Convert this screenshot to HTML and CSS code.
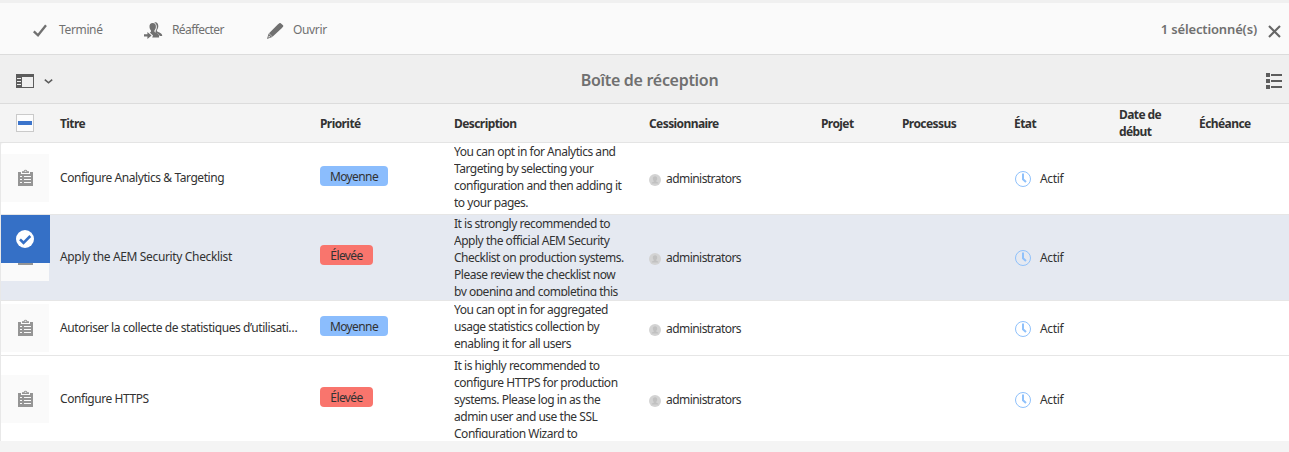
FILE: index.html
```html
<!DOCTYPE html>
<html lang="fr">
<head>
<meta charset="utf-8">
<title>Boîte de réception</title>
<link rel="stylesheet" href="styles.css">
</head>
<body>
<svg class="defs" width="0" height="0">
  <symbol id="task" viewBox="0 0 15 17">
    <path fill-rule="evenodd" d="M0 3h3v2h9V3h3v14H0zM2 7v1h2V7zM6 7v1h7V7zM2 10v1h2v-1zM6 10v1h7v-1zM2 13v1h2v-1zM6 13v1h7v-1z"/>
    <path fill-rule="evenodd" d="M4 4V2.200h1.600a2 2 0 0 1 3.800 0H11V4zM6.700 1.700v1h1.600v-1z"/>
  </symbol>
  <symbol id="clock" viewBox="0 0 16 16">
    <circle cx="8" cy="8" r="7.500" fill="none" stroke="#8fc1fb" stroke-width="1"/>
    <path d="M8 2.500v5.700l3 2.800" fill="none" stroke="#8fc1fb" stroke-width="2"/>
  </symbol>
  <symbol id="user" viewBox="0 0 12 12">
    <circle cx="6" cy="6" r="6" fill="#d3d3d3"/>
    <path d="M6 2.200c1.500 0 2.300 1 2.200 2.500 0 1-.5 1.700-1 2.200l.1.8 1.900.9v1H2.800v-1l1.900-.9.1-.8c-.5-.5-1-1.200-1-2.200C3.700 3.200 4.500 2.200 6 2.200z" fill="#c1c1c1"/>
  </symbol>
</svg>
<div class="toolbar">
  <div class="action done"><svg width="14" height="13" viewBox="0 0 14 13"><path d="M.8 7.300l4.200 4L13 1.200" fill="none" stroke="#707070" stroke-width="2.300"/></svg><span>Terminé</span></div>
  <div class="action assign"><svg width="19" height="17" viewBox="0 0 19 17" fill="#707070"><path d="M10.300.5c2-.8 4 .6 4 3.500 0 1.800-.6 3-1.400 3.900v1.300c1.500.9 3.900 1.800 4.700 2.900.5.700.6 1.200.6 1.900h-2.500c-.3-1.900-2.600-2.500-4.100-3.400V8.800c.8-1 1.200-2.300 1.200-4 0-1.900-.9-3.500-2.500-4.300z"/><path d="M8.700 1c2.200 0 3.400 1.500 3.200 3.900-.1 1.600-.7 2.600-1.400 3.300v1.700c1.600.8 4 1.400 4.400 3.100.2.800.2 1.700.2 2.500H8.200l.8-2-3.300-3c.5-.2.900-.4 1.200-.6V8.200C6.200 7.500 5.600 6.500 5.500 4.900 5.300 2.500 6.500 1 8.700 1z"/><path d="M0 12.200h3.400V10l4.200 3.400-4.200 3.500v-2.400H0z"/></svg><span>Réaffecter</span></div>
  <div class="action open"><svg width="17" height="16" viewBox="0 0 17 16" fill="#707070"><path d="M11 1.200L12.400.200c.6-.4 1.100-.3 1.600.2l2 1.900c.4.500.3 1 0 1.500l-1.300 1.500L5.500 13.800 2 10.300z"/><path fill-rule="evenodd" d="M1.600 10.500l3.700 3.600L0 16zM1.900 12.700l-.6 1.900 2-.7z"/></svg><span>Ouvrir</span></div>
  <div class="selection"><span>1 sélectionné(s)</span><svg width="13" height="13" viewBox="0 0 13 13"><path d="M1 1l11 11M12 1L1 12" stroke="#666" stroke-width="2.100"/></svg></div>
</div>
<div class="titlebar">
  <div class="rail"><svg width="18" height="14" viewBox="0 0 18 14"><path fill="#5c5c5c" fill-rule="evenodd" d="M0 0h18v14H0zM6 3v10h11V3zM1 4v1h4V4zM1 7v1h4V7zM1 10v1h4v-1z"/></svg><svg width="9" height="5" viewBox="0 0 9 5"><path d="M.8.700l3.700 3.100L8.200.7" fill="none" stroke="#5c5c5c" stroke-width="1.600"/></svg></div>
  <h1><span>Boîte de réception</span></h1>
  <svg class="list" width="17" height="16" viewBox="0 0 17 16" fill="#5c5c5c"><path d="M0 0h4v4H0zM0 6h4v4H0zM0 12h4v4H0zM5 1h11v2H5zM5 7h11v2H5zM5 13h11v2H5z"/></svg>
</div>
<div class="grid head">
  <div><i class="checkbox"></i></div>
  <div><span>Titre</span></div><div><span>Priorité</span></div><div><span>Description</span></div><div><span>Cessionnaire</span></div><div><span>Projet</span></div><div><span>Processus</span></div><div><span>État</span></div><div><span>Date de<br>début</span></div><div><span>Échéance</span></div>
</div>
<div class="table">
  <div class="grid row r1">
    <div class="thumb"><svg><use href="#task"/></svg></div>
    <div class="title"><span>Configure Analytics &amp; Targeting</span></div>
    <div><b class="pill medium">Moyenne</b></div>
    <div class="desc"><span>You can opt in for Analytics and<br>Targeting by selecting your<br>configuration and then adding it<br>to your pages.</span></div>
    <div class="user"><svg><use href="#user"/></svg><span>administrators</span></div>
    <div></div><div></div>
    <div class="state"><svg><use href="#clock"/></svg><span>Actif</span></div>
  </div>
  <div class="grid row r2 selected">
    <div class="thumb"><svg><use href="#task"/></svg></div>
    <div class="title wide"><span>Apply the AEM Security Checklist</span></div>
    <div><b class="pill high">Élevée</b></div>
    <div class="desc"><span>It is strongly recommended to<br>Apply the official AEM Security<br>Checklist on production systems.<br>Please review the checklist now<br>by opening and completing this</span></div>
    <div class="user"><svg><use href="#user"/></svg><span>administrators</span></div>
    <div></div><div></div>
    <div class="state"><svg><use href="#clock"/></svg><span>Actif</span></div>
    <div class="mark"><svg width="18" height="18" viewBox="0 0 18 18"><circle cx="9" cy="9" r="9" fill="#fff"/><path d="M4 9.400l3.500 3.400L14.300 6" fill="none" stroke="#3570c6" stroke-width="2.600"/></svg></div>
  </div>
  <div class="grid row r3">
    <div class="thumb"><svg><use href="#task"/></svg></div>
    <div class="title"><span>Autoriser la collecte de statistiques d’utilisati…</span></div>
    <div><b class="pill medium">Moyenne</b></div>
    <div class="desc"><span>You can opt in for aggregated<br>usage statistics collection by<br>enabling it for all users</span></div>
    <div class="user"><svg><use href="#user"/></svg><span>administrators</span></div>
    <div></div><div></div>
    <div class="state"><svg><use href="#clock"/></svg><span>Actif</span></div>
  </div>
  <div class="grid row r4">
    <div class="thumb"><svg><use href="#task"/></svg></div>
    <div class="title"><span>Configure HTTPS</span></div>
    <div><b class="pill high">Élevée</b></div>
    <div class="desc"><span>It is highly recommended to<br>configure HTTPS for production<br>systems. Please log in as the<br>admin user and use the SSL<br>Configuration Wizard to</span></div>
    <div class="user"><svg><use href="#user"/></svg><span>administrators</span></div>
    <div></div><div></div>
    <div class="state"><svg><use href="#clock"/></svg><span>Actif</span></div>
  </div>
</div>
</body>
</html>
```

FILE: styles.css
```css
* { box-sizing: border-box; }
body {
  margin: 0;
  height: 452px;
  overflow: hidden;
  background: #f4f4f4;
  color: #323232;
  font: 12px/17px "Noto Sans", "Open Sans", sans-serif;
  letter-spacing: -0.35px;
}
svg { display: block; flex: none; }
.defs { position: absolute; }

.toolbar {
  display: flex;
  align-items: center;
  height: 55px;
  padding: 2px 8px 0 33px;
  border-top: 3px solid #f0f0f0;
  border-bottom: 1px solid #dcdcdc;
  background: #fafafa;
  color: #707070;
}
.action { display: flex; align-items: center; }
.action svg { margin-top: 2px; }
.done { width: 111px; gap: 12px; }
.assign { width: 123px; gap: 9px; letter-spacing: -0.6px; }
.open { gap: 9px; }
.selection {
  display: flex;
  align-items: center;
  gap: 11px;
  margin-left: auto;
  font-size: 13px;
  font-weight: 600;
  letter-spacing: -0.15px;
}
.selection svg { margin-top: 3px; }

.titlebar {
  display: flex;
  align-items: center;
  height: 49px;
  padding: 4px 6px 0 16px;
  border-bottom: 1px solid #dcdcdc;
  background: #efefef;
}
.rail { display: flex; align-items: center; gap: 10px; width: 37px; }
.titlebar h1 {
  flex: 1;
  margin: 0;
  padding: 0 20px 2px 0;
  text-align: center;
  font-size: 16px;
  font-weight: 600;
  letter-spacing: -0.3px;
  color: #707070;
}

.grid {
  display: grid;
  grid-template-columns: 59px 260px 134px 195px 172px 81px 112px 105px 80px 1fr;
  align-items: center;
}
.head {
  height: 39px;
  padding-left: 1px;
  border-bottom: 1px solid #e4e4e4;
  font-weight: 700;
  letter-spacing: -0.58px;
}
.checkbox {
  display: block;
  width: 18px;
  height: 18px;
  margin: 0 0 0 15px;
  padding: 6px 1px;
  border: 1px solid #cacaca;
  background: #fcfcfc;
}
.checkbox::before {
  content: "";
  display: block;
  height: 4px;
  background: #3b74cb;
}

.table { border-left: 1px solid #e8e8e8; }
.row {
  position: relative;
  background: #fff;
  border-bottom: 1px solid #e6e6e6;
}
.r1 { height: 72px; padding-bottom: 1px; border-top-left-radius: 3px; }
.r2 { height: 86px; padding-bottom: 1px; }
.r3 { height: 55px; }
.r4 { height: 85px; padding-top: 1px; border-bottom: 0; }
.selected { background: #e5e9f1; }
.thumb {
  display: grid;
  place-items: center;
  width: 48px;
  height: 48px;
  background: #fafafa;
  fill: #959595;
}
.thumb svg { width: 15px; height: 17px; margin: 0 0 1px 1px; }
.title { white-space: nowrap; padding-bottom: 2px; letter-spacing: -0.43px; }
.wide { letter-spacing: -0.35px; }
.pill {
  display: block;
  width: 68px;
  height: 20px;
  margin-bottom: 4px;
  border-radius: 4px;
  text-align: center;
  font-weight: 400;
  line-height: 22px;
  letter-spacing: -0.6px;
}
.medium { background: #8bbdfd; }
.high { width: 53px; background: #f9756d; }
.desc {
  align-self: start;
  max-height: 81px;
  overflow: hidden;
  white-space: nowrap;
  letter-spacing: -0.48px;
}
.desc span { display: block; }
.user, .state { display: flex; align-items: center; }
.user { gap: 5px; padding-top: 1px; letter-spacing: -0.55px; }
.user svg { width: 12px; height: 12px; margin-top: 2px; }
.state { gap: 9px; padding-left: 1px; }
.state svg { width: 16px; height: 16px; margin-top: 1px; }
.mark {
  position: absolute;
  left: 0;
  top: 0;
  width: 49px;
  height: 48px;
  padding: 15px;
  background: #3570c6;
}
```
